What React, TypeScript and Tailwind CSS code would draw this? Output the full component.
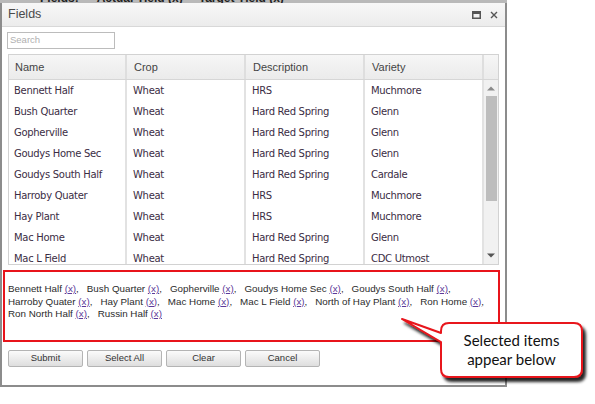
import React from 'react';

const rows = [
  ['Bennett Half', 'Wheat', 'HRS', 'Muchmore'],
  ['Bush Quarter', 'Wheat', 'Hard Red Spring', 'Glenn'],
  ['Gopherville', 'Wheat', 'Hard Red Spring', 'Glenn'],
  ['Goudys Home Sec', 'Wheat', 'Hard Red Spring', 'Glenn'],
  ['Goudys South Half', 'Wheat', 'Hard Red Spring', 'Cardale'],
  ['Harroby Quater', 'Wheat', 'HRS', 'Muchmore'],
  ['Hay Plant', 'Wheat', 'HRS', 'Muchmore'],
  ['Mac Home', 'Wheat', 'Hard Red Spring', 'Glenn'],
  ['Mac L Field', 'Wheat', 'Hard Red Spring', 'CDC Utmost'],
  ['North of Hay Plant', 'Wheat', 'HRS', 'Muchmore'],
];

const selectedLines = [
  ['Bennett Half', 'Bush Quarter', 'Gopherville', 'Goudys Home Sec', 'Goudys South Half'],
  ['Harroby Quater', 'Hay Plant', 'Mac Home', 'Mac L Field', 'North of Hay Plant', 'Ron Home'],
  ['Ron North Half', 'Russin Half'],
];

const columns = ['Name', 'Crop', 'Description', 'Variety'];

function Selected() {
  return (
    <div className="mt-[5px] ml-px w-[497px] h-[72px] border-2 border-[#e8141b] pt-[11px] pl-[3px] font-['Liberation_Sans',Arial,sans-serif] text-[9.8px] leading-[12.5px] text-[#2b2b2b]">
      {selectedLines.map((line, i) => (
        <div key={i} className="flex whitespace-nowrap">
          {line.map((name, j) => {
            const last = i === selectedLines.length - 1 && j === line.length - 1;
            return (
              <span key={name} className="mr-[8px]">
                {name}{' '}
                <span className="text-[#5b3a99] underline">(x)</span>
                {last ? '' : ','}
              </span>
            );
          })}
        </div>
      ))}
    </div>
  );
}

function Grid() {
  return (
    <div className="mt-[5px] ml-[6px] w-[491px] h-[211px] border border-[#d2d2d2] overflow-hidden">
      <div className="flex h-[25px] bg-gradient-to-b from-[#f6f6f6] to-[#ebebeb] border-b border-[#d6d6d6] font-['Liberation_Sans',Arial,sans-serif] text-[11px] text-[#444]">
        {columns.map((c, i) => (
          <div
            key={c}
            className={
              'flex items-center border-r-2 border-[#dedede] ' +
              (i === 0 ? 'w-[118px] pl-[6px]' : 'w-[119px] pl-[7px]')
            }
          >
            {c}
          </div>
        ))}
        <div className="w-[14px]" />
      </div>
      <div className="flex h-[185px]">
        <div className="flex font-['DejaVu_Sans',Verdana,sans-serif] text-[10px] tracking-[-0.3px] text-[#3b2d44]">
          {columns.map((c, ci) => (
            <div
              key={c}
              className={
                'border-r-2 border-[#e2e2e2] ' +
                (ci === 0 ? 'w-[118px] pl-[5px]' : 'w-[119px] pl-[6px]')
              }
            >
              {rows.map((r) => (
                <div key={r[0]} className="h-[21px] flex items-center whitespace-nowrap">
                  {r[ci]}
                </div>
              ))}
            </div>
          ))}
        </div>
        <div className="w-[14px] bg-[#f1f1f1] flex flex-col items-center pt-[6px]">
          <svg width="8" height="5" viewBox="0 0 8 5" className="mb-[5px]">
            <path d="M0 4.5 L4 0.5 L8 4.5 Z" fill="#8a8a8a" />
          </svg>
          <div className="w-[11px] h-[105px] bg-[#bdbdbd]" />
          <div className="flex-1" />
          <svg width="8" height="5" viewBox="0 0 8 5" className="mb-[7px]">
            <path d="M0 0.5 L4 4.5 L8 0.5 Z" fill="#555" />
          </svg>
        </div>
      </div>
    </div>
  );
}

function Buttons() {
  return (
    <div className="mt-[8px] ml-[6px] flex gap-[4px] font-['Liberation_Sans',Arial,sans-serif] text-[9.5px] text-[#333]">
      {['Submit', 'Select All', 'Clear', 'Cancel'].map((b) => (
        <button
          key={b}
          className="w-[75px] h-[17px] rounded-[2px] border border-[#b4b4b4] bg-gradient-to-b from-[#fbfbfb] to-[#dedede] flex items-center justify-center"
        >
          {b}
        </button>
      ))}
    </div>
  );
}

function Callout() {
  return (
    <>
      <svg
        className="absolute left-[395px] top-[310px]"
        width="200"
        height="80"
        viewBox="0 0 200 80"
      >
        <defs>
          <filter id="sh" x="-20%" y="-20%" width="140%" height="150%">
            <feDropShadow dx="3" dy="4" stdDeviation="1.6" floodColor="#000" floodOpacity="0.85" />
          </filter>
        </defs>
        <path
          d="M54 13 H179 Q187 13 187 21 V59 Q187 67 179 67 H54 Q46 67 46 59 V32 L7 9 L46 23 V21 Q46 13 54 13 Z"
          fill="#fff"
          stroke="#e8141b"
          strokeWidth="2"
          strokeLinejoin="round"
          filter="url(#sh)"
        />
      </svg>
      <div className="absolute left-[441px] top-[323px] w-[141px] h-[54px] flex flex-col items-center justify-center font-['Lato','Open_Sans',sans-serif] text-[15px] leading-[19px] text-[#111]">
        <div>Selected items</div>
        <div>appear below</div>
      </div>
    </>
  );
}

export default function App() {
  return (
    <div className="relative w-[595px] h-[404px] bg-white overflow-hidden">
      <div className="absolute left-0 top-0 w-[507px] h-[4px] bg-[#b9b9b9] overflow-hidden">
        <div className="absolute left-[40px] top-[-11px] whitespace-nowrap font-['Liberation_Sans',Arial,sans-serif] text-[12px] font-bold text-[#222]">
          Fields:
          <span className="ml-[18px]">Actual Yield (x)</span>
          <span className="ml-[16px]">Target Yield (x)</span>
        </div>
      </div>
      <div className="absolute left-0 top-[3px] w-[507px] h-[384px] bg-white border-x-2 border-b-2 border-[#8c8c8c] flex flex-col">
        <div className="h-[24px] shrink-0 flex items-center justify-between pl-[6px] pr-[7px] bg-gradient-to-b from-[#f7f7f7] to-[#ececec] border-b border-[#d8d8d8]">
          <span className="font-['Liberation_Sans',Arial,sans-serif] text-[12.5px] text-[#4a4a4a]">Fields</span>
          <div className="flex items-center gap-[9px]">
            <svg width="9" height="8" viewBox="0 0 9 8">
              <rect x="0.75" y="0.75" width="7.5" height="6.5" fill="none" stroke="#555" strokeWidth="1.5" />
              <rect x="0.5" y="0.5" width="8" height="2.5" fill="#555" />
            </svg>
            <svg width="8" height="8" viewBox="0 0 8 8">
              <path d="M1 1 L7 7 M7 1 L1 7" stroke="#555" strokeWidth="1.4" />
            </svg>
          </div>
        </div>
        <div className="mt-[5px] ml-[5px] w-[108px] h-[17px] border border-[#bcbcbc] flex items-center pl-[2px] font-['Liberation_Sans',Arial,sans-serif] text-[9.5px] text-[#b0b0b0]">
          Search
        </div>
        <Grid />
        <Selected />
        <Buttons />
      </div>
      <Callout />
    </div>
  );
}
